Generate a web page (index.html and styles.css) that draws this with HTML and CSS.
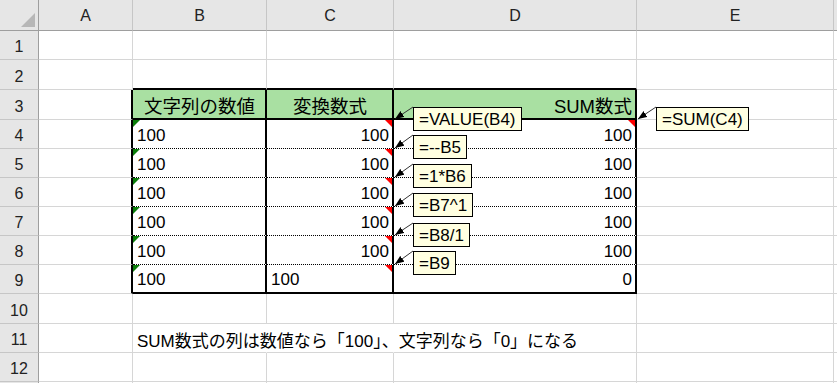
FILE: index.html
```html
<!DOCTYPE html>
<html lang="ja">
<head>
<meta charset="utf-8">
<title>Sheet</title>
<link rel="stylesheet" href="styles.css">
</head>
<body>
<div class="page">
  <div class="sheet">
    <div class="corner"><svg width="38" height="30" viewBox="0 0 38 30"><polygon points="35,13 35,27 21,27" fill="#b7b7b7"/></svg></div>
    <div class="ch">A</div><div class="ch">B</div><div class="ch">C</div><div class="ch">D</div><div class="ch">E</div><div class="ch x"></div>

    <div class="rh">1</div><div class="c"></div><div class="c"></div><div class="c"></div><div class="c"></div><div class="c"></div><div class="c x"></div>
    <div class="rh">2</div><div class="c"></div><div class="c tb"></div><div class="c tb"></div><div class="c tb"></div><div class="c"></div><div class="c x"></div>
    <div class="rh">3</div><div class="c ae"></div><div class="c t h">文字列の数値</div><div class="c t h">変換数式</div><div class="c t h hr">SUM数式</div><div class="c"></div><div class="c x"></div>
    <div class="rh">4</div><div class="c ae"></div><div class="c t d g">100</div><div class="c t d r m">100</div><div class="c t d r m">100</div><div class="c"></div><div class="c x"></div>
    <div class="rh">5</div><div class="c ae"></div><div class="c t d g">100</div><div class="c t d r m">100</div><div class="c t d r">100</div><div class="c"></div><div class="c x"></div>
    <div class="rh">6</div><div class="c ae"></div><div class="c t d g">100</div><div class="c t d r m">100</div><div class="c t d r">100</div><div class="c"></div><div class="c x"></div>
    <div class="rh">7</div><div class="c ae"></div><div class="c t d g">100</div><div class="c t d r m">100</div><div class="c t d r">100</div><div class="c"></div><div class="c x"></div>
    <div class="rh">8</div><div class="c ae"></div><div class="c t d g">100</div><div class="c t d r m">100</div><div class="c t d r">100</div><div class="c"></div><div class="c x"></div>
    <div class="rh">9</div><div class="c ae"></div><div class="c t e g">100</div><div class="c t e m">100</div><div class="c t e r">0</div><div class="c"></div><div class="c x"></div>
    <div class="rh">10</div><div class="c"></div><div class="c"></div><div class="c"></div><div class="c"></div><div class="c"></div><div class="c x"></div>
    <div class="rh">11</div><div class="c"></div><div class="c ov nb">SUM数式の列は数値なら「100」、文字列なら「0」になる</div><div class="c nb"></div><div class="c"></div><div class="c"></div><div class="c x"></div>
    <div class="rh">12</div><div class="c"></div><div class="c"></div><div class="c"></div><div class="c"></div><div class="c"></div><div class="c x"></div>
    <div class="rh"></div><div class="c"></div><div class="c"></div><div class="c"></div><div class="c"></div><div class="c"></div><div class="c x"></div>
  </div>

  <svg class="arrows" width="837" height="383" viewBox="0 0 837 383">
    <defs>
      <marker id="ah" markerUnits="userSpaceOnUse" markerWidth="9" markerHeight="7" refX="9" refY="3.5" orient="auto">
        <polygon points="0,0 9,3.5 0,7" fill="#000"/>
      </marker>
    </defs>
    <g stroke="#333" stroke-width="1" marker-end="url(#ah)">
      <line x1="413" y1="107" x2="395" y2="119"/>
      <line x1="413" y1="135" x2="395" y2="148"/>
      <line x1="413" y1="164" x2="395" y2="177"/>
      <line x1="413" y1="193" x2="395" y2="206"/>
      <line x1="413" y1="223" x2="395" y2="235"/>
      <line x1="413" y1="251" x2="395" y2="264"/>
      <line x1="656" y1="107" x2="638" y2="119"/>
    </g>
  </svg>

  <div class="note n1">=VALUE(B4)</div>
  <div class="note n2">=--B5</div>
  <div class="note n3">=1*B6</div>
  <div class="note n4">=B7^1</div>
  <div class="note n5">=B8/1</div>
  <div class="note n6">=B9</div>
  <div class="note n7">=SUM(C4)</div>
</div>
</body>
</html>
```

FILE: styles.css
```css
html, body {
  margin: 0;
  padding: 0;
  background: #fff;
  overflow: hidden;
}

.page {
  position: relative;
  width: 837px;
  height: 383px;
  overflow: hidden;
  font-family: "Liberation Sans", "Noto Sans CJK JP", sans-serif;
  color: #000;
}

.sheet {
  display: grid;
  grid-template-columns: 39px 94px 134px 127px 243px 197px 1fr;
  grid-template-rows: 31px 29px 30px 30px 29px 29px 29px 29px 29px 29px 30px 29px 29px 29px;
}

.corner,
.ch,
.rh,
.c {
  box-sizing: border-box;
  min-width: 0;
}

.corner {
  background: #e6e6e6;
  border-right: 1px solid #9e9e9e;
  border-bottom: 1px solid #9e9e9e;
}

.corner svg {
  display: block;
}

.ch {
  background: #e6e6e6;
  border-right: 1px solid #c6c6c6;
  border-bottom: 1px solid #9e9e9e;
  display: flex;
  align-items: center;
  justify-content: center;
  font-size: 16px;
  color: #222;
  padding-top: 2px;
}

.rh {
  background: #e6e6e6;
  border-right: 1px solid #9e9e9e;
  border-bottom: 1px solid #c6c6c6;
  display: flex;
  align-items: center;
  justify-content: center;
  font-size: 16px;
  color: #222;
  padding-top: 4px;
}

.c {
  position: relative;
  border-right: 1px solid #d6d6d6;
  border-bottom: 1px solid #d6d6d6;
  display: flex;
  align-items: center;
  padding: 3px 3px 0 4px;
  font-size: 17px;
  white-space: nowrap;
}

.c.x {
  border-right: none;
}

/* table borders */
.ae {
  border-right: 2px solid #000;
}

.tb {
  border-bottom: 2px solid #000;
}

.t {
  border-right: 2px solid #000;
}

.h {
  background: #a9e0a2;
  border-bottom: 2px solid #000;
  justify-content: center;
  font-size: 18.5px;
  padding-top: 2px;
}

.h.hr {
  justify-content: flex-end;
  padding-right: 3px;
}

.d {
  border-bottom: 1px dotted #000;
}

.e {
  border-bottom: 2px solid #000;
}

.r {
  justify-content: flex-end;
  padding-right: 3px;
}

/* error / comment indicators */
.g::before {
  content: "";
  position: absolute;
  left: 0;
  top: 0;
  border-top: 7px solid #0a7d0a;
  border-right: 7px solid transparent;
}

.m::after {
  content: "";
  position: absolute;
  right: 0;
  top: 0;
  border-top: 7px solid #ff0000;
  border-left: 7px solid transparent;
}

.ov {
  overflow: visible;
}

.nb {
  border-right-color: transparent;
}

/* comments overlay */
.arrows {
  position: absolute;
  left: 0;
  top: 0;
  pointer-events: none;
}

.note {
  position: absolute;
  box-sizing: border-box;
  height: 24px;
  padding: 1px 5px 0 5px;
  background: #ffffe1;
  border: 1px solid #000;
  font-size: 17px;
  line-height: 21px;
  white-space: nowrap;
}

.n1 { left: 413px; top: 107px; }
.n2 { left: 413px; top: 135px; }
.n3 { left: 413px; top: 164px; }
.n4 { left: 413px; top: 193px; }
.n5 { left: 413px; top: 223px; }
.n6 { left: 413px; top: 251px; }
.n7 { left: 656px; top: 107px; }
```
